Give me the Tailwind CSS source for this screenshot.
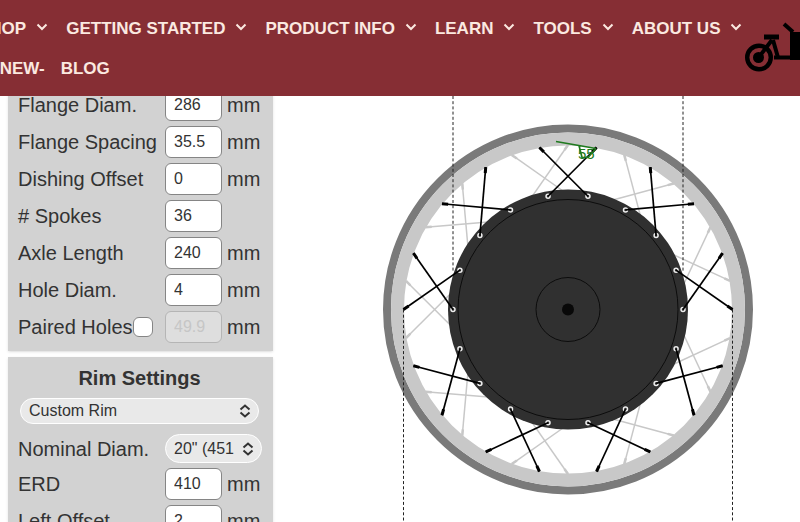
<!DOCTYPE html>
<html lang="en">
<head>
  <meta charset="UTF-8">
  <title>Spoke Calculator</title>
  <script src="https://cdn.jsdelivr.net/npm/@tailwindcss/browser@4"></script>
</head>
<body class="h-screen overflow-hidden bg-white font-['Liberation_Sans',Arial,sans-serif] text-[#333]">

<!-- Site header -->
<header class="relative z-10 flex h-24 justify-between overflow-hidden bg-[#862e34] text-[#fbe9e0]">
  <nav class="flex min-w-0 flex-1 flex-col pt-[9px] text-[17px] font-bold">
    <div class="-ml-[22px] flex h-10 items-center gap-[18px] whitespace-nowrap">
      <a href="#" class="flex items-center gap-[10px]">SHOP <svg class="mb-1 w-3" viewBox="0 0 12 8" fill="none" stroke="currentColor" stroke-width="2"><path d="M1.500 1.500 6 6l4.500-4.500"/></svg></a>
      <a href="#" class="flex items-center gap-[10px]">GETTING STARTED <svg class="mb-1 w-3" viewBox="0 0 12 8" fill="none" stroke="currentColor" stroke-width="2"><path d="M1.500 1.500 6 6l4.500-4.500"/></svg></a>
      <a href="#" class="flex items-center gap-[10px]">PRODUCT INFO <svg class="mb-1 w-3" viewBox="0 0 12 8" fill="none" stroke="currentColor" stroke-width="2"><path d="M1.500 1.500 6 6l4.500-4.500"/></svg></a>
      <a href="#" class="flex items-center gap-[10px]">LEARN <svg class="mb-1 w-3" viewBox="0 0 12 8" fill="none" stroke="currentColor" stroke-width="2"><path d="M1.500 1.500 6 6l4.500-4.500"/></svg></a>
      <a href="#" class="flex items-center gap-[10px]">TOOLS <svg class="mb-1 w-3" viewBox="0 0 12 8" fill="none" stroke="currentColor" stroke-width="2"><path d="M1.500 1.500 6 6l4.500-4.500"/></svg></a>
      <a href="#" class="flex items-center gap-[10px]">ABOUT US <svg class="mb-1 w-3" viewBox="0 0 12 8" fill="none" stroke="currentColor" stroke-width="2"><path d="M1.500 1.500 6 6l4.500-4.500"/></svg></a>
    </div>
    <div class="-ml-[6px] flex h-10 items-center gap-4 whitespace-nowrap">
      <a href="#">-NEW-</a>
      <a href="#">BLOG</a>
    </div>
  </nav>
  <a href="#" aria-label="Home" class="mt-5 shrink-0 text-black">
    <svg class="h-14 w-14" viewBox="744 20 56 56" fill="none" stroke="currentColor">
      <circle cx="759" cy="57.500" r="11.800" stroke-width="4.400"/>
      <circle cx="758.500" cy="57.500" r="5.500" fill="currentColor" stroke="none"/>
      <path d="M759 57l13-17M773 40l5 17.500" stroke-width="4"/>
      <path d="M774 57.500h26" stroke-width="4"/>
      <path d="M764 37h15" stroke-width="5"/>
      <path d="M784 24l9 8" stroke-width="4"/>
      <path d="M790 30l3 2h7v28h-10z" fill="currentColor" stroke="none"/>
    </svg>
  </a>
</header>

<main class="flex items-start">
  <!-- Settings column -->
  <div class="ml-2 flex w-[265px] shrink-0 flex-col gap-[6px] text-xl">
    <section class="-mt-2 bg-[#d2d2d2] pt-[1px] pb-2 pl-[10px] shadow">
      <div class="grid grid-cols-[147px_57px_1fr] items-center gap-y-[5px]">
        <label for="flange">Flange Diam.</label>
        <input id="flange" value="286" class="h-8 rounded-md border border-[#858585] bg-white px-2 text-base">
        <span class="pl-[5px]">mm</span>
        <label for="spacing">Flange Spacing</label>
        <input id="spacing" value="35.5" class="h-8 rounded-md border border-[#858585] bg-white px-2 text-base">
        <span class="pl-[5px]">mm</span>
        <label for="dishing">Dishing Offset</label>
        <input id="dishing" value="0" class="h-8 rounded-md border border-[#858585] bg-white px-2 text-base">
        <span class="pl-[5px]">mm</span>
        <label for="spokes"># Spokes</label>
        <input id="spokes" value="36" class="h-8 rounded-md border border-[#858585] bg-white px-2 text-base">
        <span></span>
        <label for="axle">Axle Length</label>
        <input id="axle" value="240" class="h-8 rounded-md border border-[#858585] bg-white px-2 text-base">
        <span class="pl-[5px]">mm</span>
        <label for="hole">Hole Diam.</label>
        <input id="hole" value="4" class="h-8 rounded-md border border-[#858585] bg-white px-2 text-base">
        <span class="pl-[5px]">mm</span>
        <div class="flex items-center whitespace-nowrap">
          <label for="paired">Paired Holes</label>
          <input id="paired" type="checkbox" class="h-5 w-5 shrink-0 appearance-none rounded-md border border-[#858585] bg-white">
        </div>
        <input aria-label="Paired hole distance" value="49.9" disabled class="h-8 rounded-md border border-[#b5b5b5] bg-[#dedede] px-2 text-base text-[#c6c6c6]">
        <span class="pl-[5px]">mm</span>
      </div>
    </section>

    <section class="bg-[#d2d2d2] pt-[7px] pb-2 pl-[10px] shadow">
      <h2 class="pr-3 text-center font-bold">Rim Settings</h2>
      <div class="relative mt-[6px] mr-[14px] ml-[2px]">
        <select aria-label="Rim" class="block h-[26px] w-full appearance-none rounded-full border border-white bg-[#e9e9e9] pl-2 text-base leading-5">
          <option>Custom Rim</option>
        </select>
        <svg class="pointer-events-none absolute top-[6px] right-2 h-[14px] w-3" viewBox="0 0 12 14" fill="none" stroke="currentColor" stroke-width="2"><path d="M1.500 5.500 6 1.500l4.500 4M1.500 8.500l4.500 4 4.500-4"/></svg>
      </div>
      <div class="mt-[10px] grid grid-cols-[147px_57px_1fr] items-center gap-y-[5px]">
        <label for="nominal">Nominal Diam.</label>
        <div class="relative col-span-2 mr-[11px]">
          <select id="nominal" class="block h-[29px] w-full appearance-none rounded-full border border-white bg-[#e9e9e9] pr-6 pl-2 text-base">
            <option>20" (451</option>
          </select>
          <svg class="pointer-events-none absolute top-2 right-2 h-[14px] w-3" viewBox="0 0 12 14" fill="none" stroke="currentColor" stroke-width="2"><path d="M1.500 5.500 6 1.500l4.500 4M1.500 8.500l4.500 4 4.500-4"/></svg>
        </div>
        <label for="erd">ERD</label>
        <input id="erd" value="410" class="h-8 rounded-md border border-[#858585] bg-white px-2 text-base">
        <span class="pl-[5px]">mm</span>
        <label for="left">Left Offset</label>
        <input id="left" value="2" class="h-8 rounded-md border border-[#858585] bg-white px-2 text-base">
        <span class="pl-[5px]">mm</span>
      </div>
    </section>
  </div>

  <!-- Wheel diagram, origin at the axle -->
  <svg class="h-[426px] min-w-0 flex-1" viewBox="-295 -213.500 527 426" preserveAspectRatio="xMinYMin meet" role="img" aria-label="Wheel diagram">
    <circle r="181" fill="none" stroke="#7a7a7a" stroke-width="8"/>
    <circle r="170.500" fill="none" stroke="#c8c8c8" stroke-width="13"/>
    <g id="far-spokes" stroke="#c8c8c8" stroke-width="1.500"></g>
    <circle r="120" fill="#303030"/>
    <circle r="110" fill="none" stroke="#0c0c0c"/>
    <circle r="32" fill="none" stroke="#0c0c0c"/>
    <circle r="6" fill="#080808"/>
    <g stroke="#222" stroke-dasharray="3 2.200">
      <path d="M-115-213.500V-38M115-213.500V-38M-164.500 0V213M164.500 0V213"/>
    </g>
    <g id="holes" fill="none" stroke="#eee" stroke-width="1.500"></g>
    <g id="near-spokes" stroke="#000" stroke-width="1.700"></g>
    <path d="M-12-168 28-161M11-164l3 12h6l8-9" fill="none" stroke="#1f7a1f" stroke-width="1.700"/>
    <text x="10" y="-151" font-size="15" fill="#1f7a1f">55</text>
  </svg>
</main>

<script>
  const HOLE_R = 115;
  const RIM_R = 164.5;

  function point(radius, deg) {
    const a = deg * Math.PI / 180;
    return [radius * Math.cos(a), -radius * Math.sin(a)];
  }

  // thin spoke with a thicker nipple at the rim end
  function spoke(from, to, near) {
    const [x1, y1] = point(HOLE_R, from);
    const [x2, y2] = point(RIM_R, to);
    const nx = x2 - (x2 - x1) * 0.09;
    const ny = y2 - (y2 - y1) * 0.09;
    return `<path d="M${x1} ${y1}L${x2} ${y2}"/><path d="M${nx} ${ny}L${x2} ${y2}" stroke-width="${near ? 3 : 2.5}"/>`;
  }

  let near = "", far = "", holes = "";
  for (let a = 0; a < 360; a += 40) {
    near += spoke(a, a + 20, true) + spoke(a + 20, a, true);
    far += spoke(a + 10, a + 30, false) + spoke(a + 30, a + 10, false);
  }
  for (let a = 0; a < 360; a += 20) {
    const [x, y] = point(HOLE_R, a);
    holes += `<circle cx="${x}" cy="${y}" r="2"/>`;
  }
  document.getElementById("near-spokes").innerHTML = near;
  document.getElementById("far-spokes").innerHTML = far;
  document.getElementById("holes").innerHTML = holes;
</script>

</body>
</html>
